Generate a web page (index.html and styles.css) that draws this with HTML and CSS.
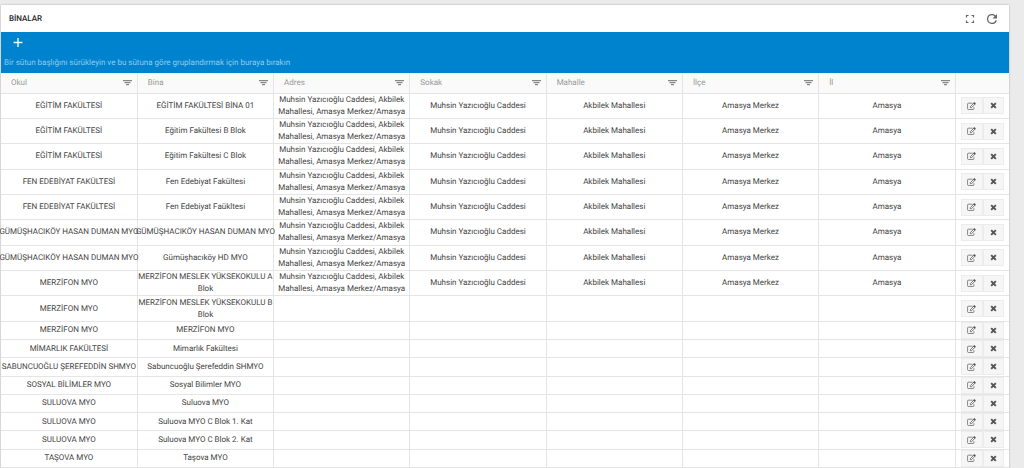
FILE: index.html
```html
<!DOCTYPE html>
<html lang="tr">
<head>
<meta charset="utf-8">
<title>Binalar</title>
<link rel="stylesheet" href="styles.css">
</head>
<body>
<svg width="0" height="0" class="sprite" aria-hidden="true">
  <symbol id="filter" viewBox="0 0 9 6"><path d="M0 .7h9M1.500 2.700h6M3 4.700h3" stroke="currentColor" stroke-width="1.300" fill="none"/></symbol>
  <symbol id="edit" viewBox="0 0 16 14"><path d="M12.300 9v2.700a1.500 1.500 0 0 1-1.500 1.500H2.500A1.500 1.500 0 0 1 1 11.700V3.500A1.500 1.500 0 0 1 2.500 2H10" fill="none" stroke="currentColor" stroke-width="1.200"/><path d="M6 8 12.500 1.500l2 2L8 10H6z" fill="none" stroke="currentColor" stroke-width="1.400"/><path d="M11.200 2l2.600 2.600L15.700 2.700 13.100.1z" fill="currentColor"/></symbol>
  <symbol id="remove" viewBox="0 0 12 12"><path d="M2 2l8 8M10 2l-8 8" stroke="currentColor" stroke-width="3.400" fill="none"/></symbol>
</svg>
<main class="card">
  <header class="card-head">
    <h1>BİNALAR</h1>
    <div class="tools">
      <button type="button" aria-label="Tam ekran"><svg class="full" viewBox="0 0 10 10"><path d="M1.500 3.500v-2h2M6.500 1.500h2v2M8.500 6.500v2h-2M3.500 8.500h-2v-2" fill="none" stroke="currentColor" stroke-width="1.200"/></svg></button>
      <button type="button" aria-label="Yenile"><svg class="refresh" viewBox="4 4 16 16"><path d="M17.650 6.350A7.960 7.960 0 0 0 12 4a8 8 0 1 0 7.730 10h-2.080A6 6 0 1 1 12 6c1.660 0 3.140.690 4.220 1.780L13 11h7V4z" fill="currentColor"/></svg></button>
    </div>
  </header>
  <section class="bar">
    <button type="button" class="add" aria-label="Ekle"><svg viewBox="0 0 10 10"><path d="M5 1v8M1 5h8" stroke="currentColor" stroke-width="1.200"/></svg></button>
    <p>Bir sütun başlığını sürükleyin ve bu sütuna göre gruplandırmak için buraya bırakın</p>
  </section>
  <table>
    <thead><tr id="head"></tr></thead>
    <tbody id="rows"></tbody>
  </table>
</main>
<script src="script.js"></script>
</body>
</html>
```
FILE: styles.css
```css
* { box-sizing: border-box; }
body { margin: 0; padding: 5px 15px 0 1px; height: 100vh; overflow: hidden; background: #ebebeb; color: #444; font: 8px/12px Roboto, "Noto Sans", sans-serif; text-rendering: geometricPrecision; }
.sprite { position: absolute; }
.card { background: #fff; box-shadow: 0 0 2px #aaa; }
.card-head { display: flex; align-items: center; justify-content: space-between; height: 27px; padding: 0 12px 0 8px; }
h1 { margin: 0; font-size: 8px; font-weight: 500; color: #222; }
button { display: flex; align-items: center; justify-content: center; padding: 0; border: 0; background: none; color: inherit; }
.tools { display: flex; gap: 12px; color: #666; }
.tools svg { display: block; width: 10px; height: 10px; }
.bar { display: flex; flex-direction: column; align-items: flex-start; justify-content: space-between; height: 41px; padding: 5px 3px 4px; background: #0083ce; color: #8fcbee; }
.bar p { margin: 0; }
.add { margin-left: 8px; color: #fff; }
.add svg { width: 12px; height: 11px; }
table { width: 100%; height: calc(100vh - 73px); table-layout: fixed; border-collapse: collapse; }
th { height: 20px; padding: 0 5px 0 10px; border: 1px solid #e5e5e5; border-top: 0; border-left: 0; background: #fafafa; color: #999; font-weight: 400; text-align: left; }
th:last-child { width: 54px; border-right: 0; }
.label { display: flex; align-items: center; justify-content: space-between; }
.label button { color: #888; }
.label svg { width: 9px; height: 6px; }
td { height: 18px; padding: 0; border: 1px solid #e5e5e5; border-top: 0; border-left: 0; text-align: center; vertical-align: middle; }
td:last-child { border-right: 0; }
.line { display: flex; justify-content: center; white-space: nowrap; }
.actions { display: flex; justify-content: center; }
.actions button { width: 21px; height: 17px; background: #f6f6f6; border: 1px solid #ececec; color: #555; }
.actions .edit { width: 22px; }
.edit svg { width: 9px; height: 8px; }
.remove svg { width: 7px; height: 7px; }
```
FILE: script.js
```js
const heads = ["Okul", "Bina", "Adres", "Sokak", "Mahalle", "İlçe", "İl"];
const place = ["Muhsin Yazıcıoğlu Caddesi, Akbilek Mahallesi, Amasya Merkez/Amasya", "Muhsin Yazıcıoğlu Caddesi", "Akbilek Mahallesi", "Amasya Merkez", "Amasya"];
const none = ["", "", "", "", ""];
const rows = [
  ["EĞİTİM FAKÜLTESİ", "EĞİTİM FAKÜLTESİ BİNA 01", ...place],
  ["EĞİTİM FAKÜLTESİ", "Eğitim Fakültesi B Blok", ...place],
  ["EĞİTİM FAKÜLTESİ", "Eğitim Fakültesi C Blok", ...place],
  ["FEN EDEBİYAT FAKÜLTESİ", "Fen Edebiyat Fakültesi", ...place],
  ["FEN EDEBİYAT FAKÜLTESİ", "Fen Edebiyat Faükltesi", ...place],
  ["GÜMÜŞHACIKÖY HASAN DUMAN MYO", "GÜMÜŞHACIKÖY HASAN DUMAN MYO", ...place],
  ["GÜMÜŞHACIKÖY HASAN DUMAN MYO", "Gümüşhacıköy HD MYO", ...place],
  ["MERZİFON MYO", "MERZİFON MESLEK YÜKSEKOKULU A Blok", ...place],
  ["MERZİFON MYO", "MERZİFON MESLEK YÜKSEKOKULU B Blok", ...none],
  ["MERZİFON MYO", "MERZİFON MYO", ...none],
  ["MİMARLIK FAKÜLTESİ", "Mimarlık Fakültesi", ...none],
  ["SABUNCUOĞLU ŞEREFEDDİN SHMYO", "Sabuncuoğlu Şerefeddin SHMYO", ...none],
  ["SOSYAL BİLİMLER MYO", "Sosyal Bilimler MYO", ...none],
  ["SULUOVA MYO", "Suluova MYO", ...none],
  ["SULUOVA MYO", "Suluova MYO C Blok 1. Kat", ...none],
  ["SULUOVA MYO", "Suluova MYO C Blok 2. Kat", ...none],
  ["TAŞOVA MYO", "Taşova MYO", ...none]
];
const icon = name => `<svg><use href="#${name}"/></svg>`;
const cell = text => text.length < 30 ? `<td><span class="line">${text}</span></td>` : `<td>${text}</td>`;
document.getElementById("head").innerHTML = heads.map(h =>
  `<th><div class="label">${h}<button type="button" aria-label="${h} filtrele">${icon("filter")}</button></div></th>`).join("") + "<th></th>";
document.getElementById("rows").innerHTML = rows.map(r =>
  `<tr>${r.map(cell).join("")}<td><div class="actions"><button type="button" class="edit" aria-label="Düzenle">${icon("edit")}</button><button type="button" class="remove" aria-label="Sil">${icon("remove")}</button></div></td></tr>`).join("");
```
